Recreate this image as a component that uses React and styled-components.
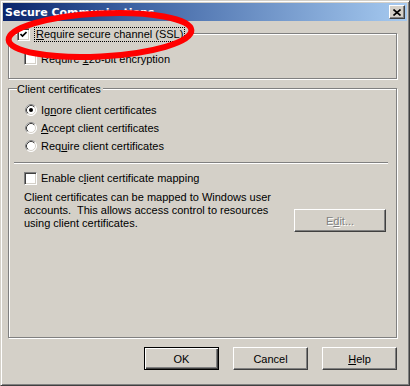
import React from 'react';
import styled, { createGlobalStyle } from 'styled-components';

const GlobalStyle = createGlobalStyle`
  html, body {
    margin: 0;
    padding: 0;
    background: #d4d0c8;
  }
  body {
    font-family: 'Liberation Sans', Arial, sans-serif;
    font-size: 11px;
    color: #000;
  }
`;

const Window = styled.div`
  position: relative;
  width: 410px;
  height: 386px;
  box-sizing: border-box;
  background: #d4d0c8;
  border: 1px solid;
  border-color: #d4d0c8 #404040 #404040 #d4d0c8;
  box-shadow: inset 1px 1px #fff, inset -1px -1px #808080;
  padding: 2px;
  display: flex;
  flex-direction: column;
  overflow: hidden;
`;

const TitleBar = styled.div`
  height: 18px;
  flex: none;
  display: flex;
  align-items: center;
  justify-content: space-between;
  padding: 0 2px 0 2px;
  background: linear-gradient(to right, #0a246a 0%, #3a5fa0 30%, #a6caf0 100%);
`;

const Title = styled.span`
  font-family: 'DejaVu Sans', sans-serif;
  font-weight: bold;
  font-size: 11px;
  color: #fff;
`;

const CloseButton = styled.div`
  width: 16px;
  height: 14px;
  box-sizing: border-box;
  background: #d4d0c8;
  border: 1px solid;
  border-color: #fff #404040 #404040 #fff;
  box-shadow: inset -1px -1px #808080;
  display: flex;
  align-items: center;
  justify-content: center;
`;

const Body = styled.div`
  flex: 1;
  display: flex;
  flex-direction: column;
  padding: 12px 10px 0 5px;
`;

const Group = styled.div`
  position: relative;
  box-sizing: border-box;
  height: ${(p) => p.$height}px;
  margin-bottom: ${(p) => p.$gap || 0}px;
  border: 1px solid #808080;
  box-shadow: inset 1px 1px #fff, 1px 1px #fff;
  padding: ${(p) => p.$pad};
  display: flex;
  flex-direction: column;
`;

const Legend = styled.div`
  position: absolute;
  top: -8px;
  left: 8px;
  height: 16px;
  display: flex;
  align-items: center;
  gap: 4px;
  padding: 0 2px 0 0;
  background: #d4d0c8;
`;

const FocusText = styled.span`
  border: 1px dotted #000;
  padding: 0 1px;
  line-height: 13px;
`;

const Row = styled.div`
  height: ${(p) => p.$h || 17}px;
  display: flex;
  align-items: center;
  gap: 4px;
  margin-top: ${(p) => p.$mt || 0}px;
`;

const Box = styled.span`
  width: 13px;
  height: 13px;
  box-sizing: border-box;
  flex: none;
  background: #fff;
  border: 1px solid;
  border-color: #808080 #fff #fff #808080;
  box-shadow: inset 1px 1px #404040, inset -1px -1px #d4d0c8;
  display: flex;
  align-items: center;
  justify-content: center;
`;

const RadioWrap = styled.span`
  width: 12px;
  height: 12px;
  flex: none;
  margin-left: 1px;
  display: flex;
`;

const Separator = styled.div`
  height: 1px;
  background: #808080;
  border-bottom: 1px solid #fff;
  margin: 8px 8px 0 -10px;
`;

const InfoRow = styled.div`
  display: flex;
  justify-content: space-between;
  margin-top: 5px;
  padding-right: 10px;
`;

const Info = styled.div`
  line-height: 13px;
  white-space: pre;
`;

const Button = styled.button`
  width: ${(p) => p.$w || 75}px;
  height: 23px;
  box-sizing: border-box;
  margin: 0;
  padding: 0;
  font-family: 'Liberation Sans', Arial, sans-serif;
  font-size: 11px;
  color: ${(p) => (p.disabled ? '#808080' : '#000')};
  text-shadow: ${(p) => (p.disabled ? '1px 1px #fff' : 'none')};
  background: #d4d0c8;
  border: 1px solid;
  border-color: ${(p) => (p.$default ? '#000' : '#fff #404040 #404040 #fff')};
  box-shadow: ${(p) =>
    p.$default
      ? 'inset 1px 1px #fff, inset -1px -1px #404040, inset -2px -2px #808080'
      : 'inset -1px -1px #808080'};
  margin-top: ${(p) => p.$mt || 0}px;
`;

const ButtonRow = styled.div`
  display: flex;
  justify-content: flex-end;
  gap: 14px;
  padding: 9px 0 0 0;
`;

const Ellipse = styled.svg`
  position: absolute;
  left: 0;
  top: 0;
  pointer-events: none;
`;

const Check = () => (
  <svg width="7" height="7" viewBox="0 0 7 7">
    <polyline points="0.5,3 2.5,5 6.5,1" fill="none" stroke="#000" strokeWidth="1.7" />
  </svg>
);

const Checkbox = ({ checked }) => <Box>{checked && <Check />}</Box>;

const Radio = ({ checked }) => (
  <RadioWrap>
    <svg width="12" height="12" viewBox="0 0 12 12">
      <circle cx="6" cy="6" r="5.5" fill="#fff" stroke="#fff" />
      <path d="M2.11 9.89 A5.5 5.5 0 0 1 9.89 2.11" fill="none" stroke="#808080" />
      <circle cx="6" cy="6" r="4.5" fill="none" stroke="#d4d0c8" />
      <path d="M2.82 9.18 A4.5 4.5 0 0 1 9.18 2.82" fill="none" stroke="#404040" />
      <circle cx="6" cy="6" r="3.6" fill="#fff" />
      {checked && <circle cx="6" cy="6" r="2" fill="#000" />}
    </svg>
  </RadioWrap>
);

const App = () => (
  <>
    <GlobalStyle />
    <Window>
      <TitleBar>
        <Title>Secure Communications</Title>
        <CloseButton>
          <svg width="8" height="7" viewBox="0 0 8 7">
            <path d="M0.5 0.5 L7.5 6.5 M7.5 0.5 L0.5 6.5" stroke="#000" strokeWidth="1.6" />
          </svg>
        </CloseButton>
      </TitleBar>
      <Body>
        <Group $height={46} $gap={9} $pad="16px 0 0 15px">
          <Legend>
            <Checkbox checked />
            <FocusText>
              <u>R</u>equire secure channel (SSL)
            </FocusText>
          </Legend>
          <Row $h={17}>
            <Checkbox />
            <span>
              Require <u>1</u>28-bit encryption
            </span>
          </Row>
        </Group>

        <Group $height={250} $pad="12px 0 0 15px">
          <Legend>Client certificates</Legend>
          <Row $h={18}>
            <Radio checked />
            <span>
              Ig<u>n</u>ore client certificates
            </span>
          </Row>
          <Row $h={18}>
            <Radio />
            <span>
              <u>A</u>ccept client certificates
            </span>
          </Row>
          <Row $h={17}>
            <Radio />
            <span>
              Req<u>u</u>ire client certificates
            </span>
          </Row>
          <Separator />
          <Row $h={16} $mt={6}>
            <Checkbox />
            <span>
              Enable c<u>l</u>ient certificate mapping
            </span>
          </Row>
          <InfoRow>
            <Info>
              {'Client certificates can be mapped to Windows user\naccounts.  This allows access control to resources\nusing client certificates.'}
            </Info>
            <Button disabled $w={92} $mt={18}>
              E<u>d</u>it...
            </Button>
          </InfoRow>
        </Group>

        <ButtonRow>
          <Button $default>OK</Button>
          <Button>Cancel</Button>
          <Button>
            <u>H</u>elp
          </Button>
        </ButtonRow>
      </Body>
      <Ellipse width="410" height="80" viewBox="0 0 410 80">
        <ellipse
          cx="99"
          cy="34"
          rx="91.5"
          ry="21.5"
          fill="none"
          stroke="#f00"
          strokeWidth="6"
          transform="rotate(-3 99 34)"
        />
      </Ellipse>
    </Window>
  </>
);

export default App;
